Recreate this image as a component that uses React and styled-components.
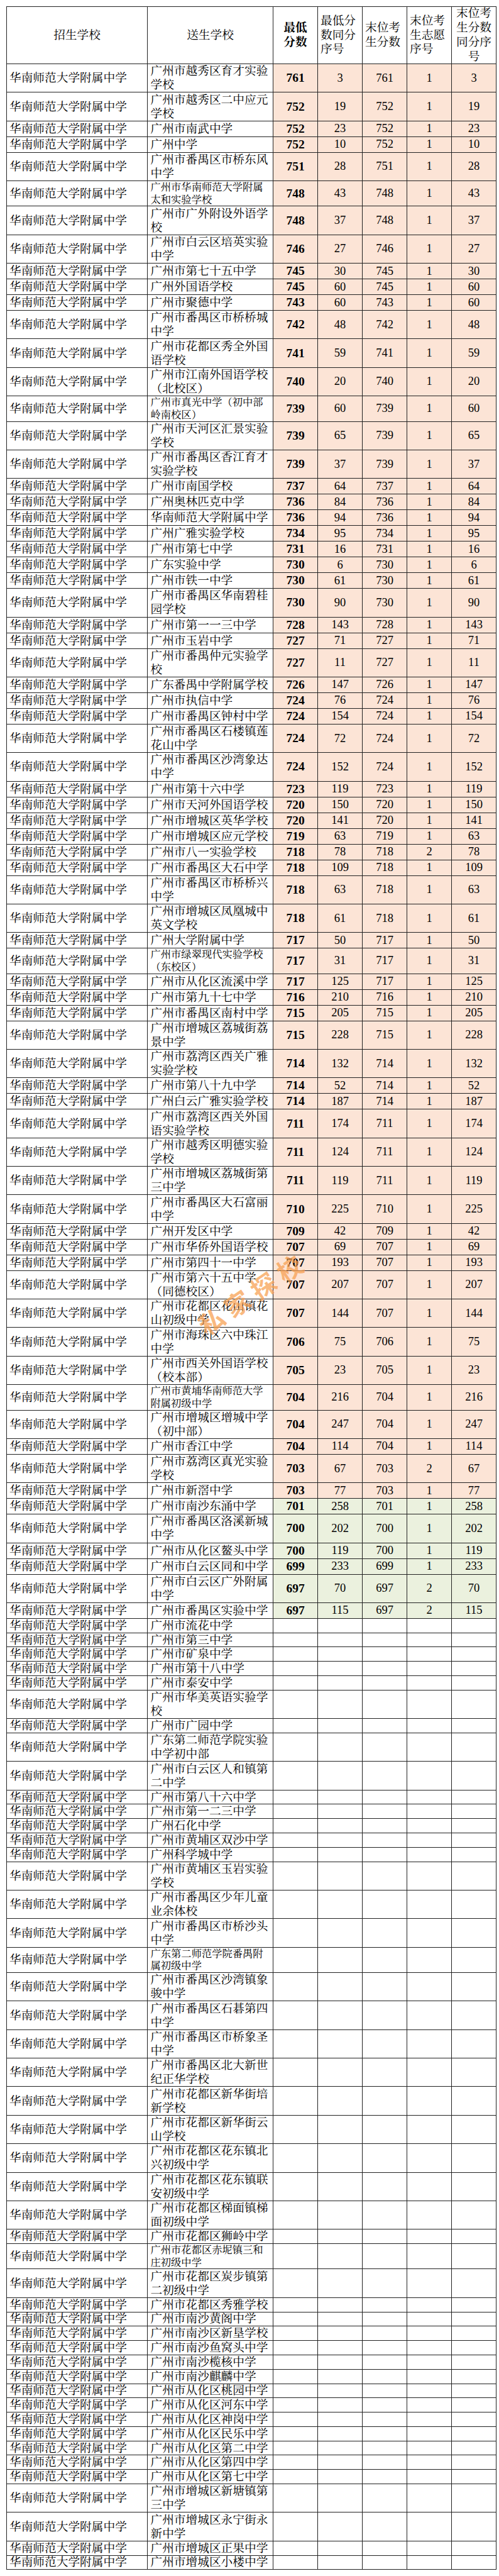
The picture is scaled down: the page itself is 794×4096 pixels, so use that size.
import styled, { createGlobalStyle } from "styled-components";

const GlobalStyle = createGlobalStyle`
  body {
    margin: 0;
    background: #fff;
  }
`;

const FONT = `"Liberation Serif", "Noto Serif CJK SC", "Noto Sans CJK SC", serif`;
const LINE = "#222";

const Page = styled.div`
  position: relative;
  padding: 10px 0 12px 10px;
  font-family: ${FONT};
  color: #000;
`;

const Table = styled.div`
  box-sizing: border-box;
  width: 780px;
  border-top: 1px solid ${LINE};
  border-left: 1px solid ${LINE};
`;

const Row = styled.div`
  display: grid;
  grid-template-columns: 224px 200px repeat(5, 71px);
  height: ${(p) => p.h}px;
`;

const Cell = styled.div`
  box-sizing: border-box;
  border-right: 1px solid ${LINE};
  border-bottom: 1px solid ${LINE};
  display: flex;
  align-items: center;
  overflow: hidden;
  background: ${(p) => p.bg || "#fff"};
`;

const HeadCell = styled(Cell)`
  flex-direction: column;
  justify-content: center;
  align-items: ${(p) => (p.left ? "flex-start" : "center")};
  padding-left: ${(p) => (p.left ? "4px" : "0")};
  font-size: 18.7px;
  line-height: 22.8px;
  font-weight: ${(p) => (p.bold ? 700 : 400)};
`;

const HeadLine = styled.span`
  display: block;
  white-space: nowrap;
  align-self: ${(p) => (p.center ? "center" : "auto")};
`;

const SchoolCell = styled(Cell)`
  padding-left: ${(p) => p.pad}px;
  font-size: ${(p) => (p.small ? 16.3 : 18.7)}px;
  line-height: ${(p) => (p.small ? 19.5 : 22)}px;
  white-space: pre;
`;

const NumCell = styled(Cell)`
  justify-content: center;
  font-size: ${(p) => (p.strong ? 19.5 : 18.5)}px;
  font-weight: ${(p) => (p.strong ? 700 : 400)};
`;

const Watermark = styled.div`
  position: absolute;
  left: 302px;
  top: 2026px;
  font-family: "Noto Sans CJK SC", sans-serif;
  font-size: 40px;
  font-weight: 700;
  letter-spacing: 10px;
  color: rgba(247, 158, 78, 0.72);
  transform: rotate(-34deg);
  white-space: nowrap;
  pointer-events: none;
`;

const PEACH = "#fce4d6";
const GREEN = "#ebf1de";

const ranked = [
  ["广州市越秀区育才实验\n学校", 761, 3, 761, 1, 3],
  ["广州市越秀区二中应元\n学校", 752, 19, 752, 1, 19],
  ["广州市南武中学", 752, 23, 752, 1, 23],
  ["广州中学", 752, 10, 752, 1, 10],
  ["广州市番禺区市桥东风\n中学", 751, 28, 751, 1, 28],
  ["广州市华南师范大学附属\n太和实验学校", 748, 43, 748, 1, 43, true],
  ["广州市广外附设外语学\n校", 748, 37, 748, 1, 37],
  ["广州市白云区培英实验\n中学", 746, 27, 746, 1, 27],
  ["广州市第七十五中学", 745, 30, 745, 1, 30],
  ["广州外国语学校", 745, 60, 745, 1, 60],
  ["广州市聚德中学", 743, 60, 743, 1, 60],
  ["广州市番禺区市桥桥城\n中学", 742, 48, 742, 1, 48],
  ["广州市花都区秀全外国\n语学校", 741, 59, 741, 1, 59],
  ["广州市江南外国语学校\n（北校区）", 740, 20, 740, 1, 20],
  ["广州市真光中学（初中部\n岭南校区）", 739, 60, 739, 1, 60, true],
  ["广州市天河区汇景实验\n学校", 739, 65, 739, 1, 65],
  ["广州市番禺区香江育才\n实验学校", 739, 37, 739, 1, 37],
  ["广州市南国学校", 737, 64, 737, 1, 64],
  ["广州奥林匹克中学", 736, 84, 736, 1, 84],
  ["华南师范大学附属中学", 736, 94, 736, 1, 94],
  ["广州广雅实验学校", 734, 95, 734, 1, 95],
  ["广州市第七中学", 731, 16, 731, 1, 16],
  ["广东实验中学", 730, 6, 730, 1, 6],
  ["广州市铁一中学", 730, 61, 730, 1, 61],
  ["广州市番禺区华南碧桂\n园学校", 730, 90, 730, 1, 90],
  ["广州市第一一三中学", 728, 143, 728, 1, 143],
  ["广州市玉岩中学", 727, 71, 727, 1, 71],
  ["广州市番禺仲元实验学\n校", 727, 11, 727, 1, 11],
  ["广东番禺中学附属学校", 726, 147, 726, 1, 147],
  ["广州市执信中学", 724, 76, 724, 1, 76],
  ["广州市番禺区钟村中学", 724, 154, 724, 1, 154],
  ["广州市番禺区石楼镇莲\n花山中学", 724, 72, 724, 1, 72],
  ["广州市番禺区沙湾象达\n中学", 724, 152, 724, 1, 152],
  ["广州市第十六中学", 723, 119, 723, 1, 119],
  ["广州市天河外国语学校", 720, 150, 720, 1, 150],
  ["广州市增城区英华学校", 720, 141, 720, 1, 141],
  ["广州市增城区应元学校", 719, 63, 719, 1, 63],
  ["广州市八一实验学校", 718, 78, 718, 2, 78],
  ["广州市番禺区大石中学", 718, 109, 718, 1, 109],
  ["广州市番禺区市桥桥兴\n中学", 718, 63, 718, 1, 63],
  ["广州市增城区凤凰城中\n英文学校", 718, 61, 718, 1, 61],
  ["广州大学附属中学", 717, 50, 717, 1, 50],
  ["广州市绿翠现代实验学校\n（东校区）", 717, 31, 717, 1, 31, true],
  ["广州市从化区流溪中学", 717, 125, 717, 1, 125],
  ["广州市第九十七中学", 716, 210, 716, 1, 210],
  ["广州市番禺区南村中学", 715, 205, 715, 1, 205],
  ["广州市增城区荔城街荔\n景中学", 715, 228, 715, 1, 228],
  ["广州市荔湾区西关广雅\n实验学校", 714, 132, 714, 1, 132],
  ["广州市第八十九中学", 714, 52, 714, 1, 52],
  ["广州白云广雅实验学校", 714, 187, 714, 1, 187],
  ["广州市荔湾区西关外国\n语实验学校", 711, 174, 711, 1, 174],
  ["广州市越秀区明德实验\n学校", 711, 124, 711, 1, 124],
  ["广州市增城区荔城街第\n三中学", 711, 119, 711, 1, 119],
  ["广州市番禺区大石富丽\n中学", 710, 225, 710, 1, 225],
  ["广州开发区中学", 709, 42, 709, 1, 42],
  ["广州市华侨外国语学校", 707, 69, 707, 1, 69],
  ["广州市第四十一中学", 707, 193, 707, 1, 193],
  ["广州市第六十五中学\n（同德校区）", 707, 207, 707, 1, 207],
  ["广州市花都区花山镇花\n山初级中学", 707, 144, 707, 1, 144],
  ["广州市海珠区六中珠江\n中学", 706, 75, 706, 1, 75],
  ["广州市西关外国语学校\n（校本部）", 705, 23, 705, 1, 23],
  ["广州市黄埔华南师范大学\n附属初级中学", 704, 216, 704, 1, 216, true],
  ["广州市增城区增城中学\n（初中部）", 704, 247, 704, 1, 247],
  ["广州市香江中学", 704, 114, 704, 1, 114],
  ["广州市荔湾区真光实验\n学校", 703, 67, 703, 2, 67],
  ["广州市新滘中学", 703, 77, 703, 1, 77],
  ["广州市南沙东涌中学", 701, 258, 701, 1, 258],
  ["广州市番禺区洛溪新城\n中学", 700, 202, 700, 1, 202],
  ["广州市从化区鳌头中学", 700, 119, 700, 1, 119],
  ["广州市白云区同和中学", 699, 233, 699, 1, 233],
  ["广州市白云区广外附属\n中学", 697, 70, 697, 2, 70],
  ["广州市番禺区实验中学", 697, 115, 697, 2, 115],
];

// rows after the peach block are shaded green
const GREEN_FROM = 66;

const unranked = [
  "广州市流花中学",
  "广州市第三中学",
  "广州市矿泉中学",
  "广州市第十八中学",
  "广州市泰安中学",
  "广州市华美英语实验学\n校",
  "广州市广园中学",
  "广东第二师范学院实验\n中学初中部",
  "广州市白云区人和镇第\n二中学",
  "广州市第八十六中学",
  "广州市第一二三中学",
  "广州石化中学",
  "广州市黄埔区双沙中学",
  "广州科学城中学",
  "广州市黄埔区玉岩实验\n学校",
  "广州市番禺区少年儿童\n业余体校",
  "广州市番禺区市桥沙头\n中学",
  "广东第二师范学院番禺附\n属初级中学",
  "广州市番禺区沙湾镇象\n骏中学",
  "广州市番禺区石碁第四\n中学",
  "广州市番禺区市桥象圣\n中学",
  "广州市番禺区北大新世\n纪正华学校",
  "广州市花都区新华街培\n新学校",
  "广州市花都区新华街云\n山学校",
  "广州市花都区花东镇北\n兴初级中学",
  "广州市花都区花东镇联\n安初级中学",
  "广州市花都区梯面镇梯\n面初级中学",
  "广州市花都区狮岭中学",
  "广州市花都区赤坭镇三和\n庄初级中学",
  "广州市花都区炭步镇第\n二初级中学",
  "广州市花都区秀雅学校",
  "广州市南沙黄阁中学",
  "广州市南沙区新垦学校",
  "广州市南沙鱼窝头中学",
  "广州市南沙榄核中学",
  "广州市南沙麒麟中学",
  "广州市从化区桃园中学",
  "广州市从化区河东中学",
  "广州市从化区神岗中学",
  "广州市从化区民乐中学",
  "广州市从化区第二中学",
  "广州市从化区第四中学",
  "广州市从化区第七中学",
  "广州市增城区新塘镇第\n三中学",
  "广州市增城区永宁街永\n新中学",
  "广州市增城区正果中学",
  "广州市增城区小楼中学",
];

const SMALL_NAMES = ["广东第二师范学院番禺附\n属初级中学", "广州市花都区赤坭镇三和\n庄初级中学"];

const HOST = "华南师范大学附属中学";

const rowHeight = (name, small, single) => {
  if (small) return 40.4;
  if (name.includes("\n")) return 45.35;
  return single;
};

const Header = () => (
  <Row h={91}>
    <HeadCell>
      <HeadLine>招生学校</HeadLine>
    </HeadCell>
    <HeadCell>
      <HeadLine>送生学校</HeadLine>
    </HeadCell>
    <HeadCell bold>
      <HeadLine>最低</HeadLine>
      <HeadLine>分数</HeadLine>
    </HeadCell>
    <HeadCell left>
      <HeadLine>最低分</HeadLine>
      <HeadLine>数同分</HeadLine>
      <HeadLine>序号</HeadLine>
    </HeadCell>
    <HeadCell left>
      <HeadLine>末位考</HeadLine>
      <HeadLine>生分数</HeadLine>
    </HeadCell>
    <HeadCell left>
      <HeadLine>末位考</HeadLine>
      <HeadLine>生志愿</HeadLine>
      <HeadLine>序号</HeadLine>
    </HeadCell>
    <HeadCell>
      <HeadLine>末位考</HeadLine>
      <HeadLine>生分数</HeadLine>
      <HeadLine>同分序</HeadLine>
      <HeadLine center>号</HeadLine>
    </HeadCell>
  </Row>
);

const RankedRow = ({ item, tone }) => {
  const [name, low, lowNo, last, wish, lastNo, small] = item;
  return (
    <Row h={rowHeight(name, small, 25)}>
      <SchoolCell pad={4}>{HOST}</SchoolCell>
      <SchoolCell pad={4.5} small={small}>
        {name}
      </SchoolCell>
      <NumCell bg={tone} strong>
        {low}
      </NumCell>
      <NumCell bg={tone}>{lowNo}</NumCell>
      <NumCell bg={tone}>{last}</NumCell>
      <NumCell bg={tone}>{wish}</NumCell>
      <NumCell bg={tone}>{lastNo}</NumCell>
    </Row>
  );
};

const EmptyRow = ({ name }) => {
  const small = SMALL_NAMES.includes(name);
  return (
    <Row h={rowHeight(name, small, 22.8)}>
      <SchoolCell pad={4}>{HOST}</SchoolCell>
      <SchoolCell pad={4.5} small={small}>
        {name}
      </SchoolCell>
      <NumCell />
      <NumCell />
      <NumCell />
      <NumCell />
      <NumCell />
    </Row>
  );
};

export default function App() {
  return (
    <>
      <GlobalStyle />
      <Page>
        <Table>
          <Header />
          {ranked.map((item, i) => (
            <RankedRow
              key={item[0]}
              item={item}
              tone={i < GREEN_FROM ? PEACH : GREEN}
            />
          ))}
          {unranked.map((name) => (
            <EmptyRow key={name} name={name} />
          ))}
        </Table>
        <Watermark>私家探校</Watermark>
      </Page>
    </>
  );
}
